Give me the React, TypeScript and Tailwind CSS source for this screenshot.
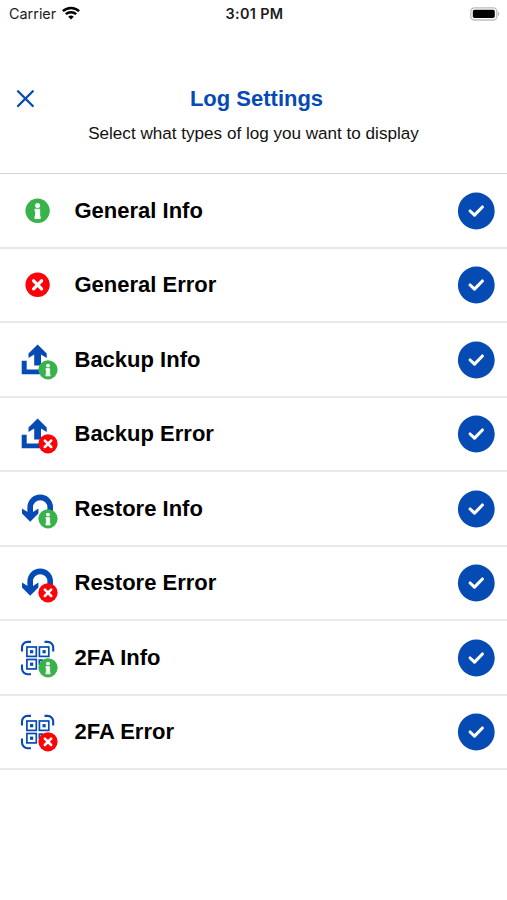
import { useState } from 'react';

type Glyph = 'general' | 'backup' | 'restore' | 'twofa';
type Level = 'info' | 'error';

const LOG_TYPES: { label: string; glyph: Glyph; level: Level }[] = [
  { label: 'General Info', glyph: 'general', level: 'info' },
  { label: 'General Error', glyph: 'general', level: 'error' },
  { label: 'Backup Info', glyph: 'backup', level: 'info' },
  { label: 'Backup Error', glyph: 'backup', level: 'error' },
  { label: 'Restore Info', glyph: 'restore', level: 'info' },
  { label: 'Restore Error', glyph: 'restore', level: 'error' },
  { label: '2FA Info', glyph: 'twofa', level: 'info' },
  { label: '2FA Error', glyph: 'twofa', level: 'error' },
];

const BLUE = '#064ab4';

// Drawn around 0,0 with a radius of 12
function Badge({ level }: { level: Level }) {
  if (level === 'error') {
    return (
      <>
        <circle r="12.2" fill="#fd0207" />
        <path d="M-4 -4L4 4M4 -4L-4 4" stroke="white" strokeWidth="3.3" strokeLinecap="round" />
      </>
    );
  }
  return (
    <>
      <circle r="12.2" fill="#37b34a" />
      <circle cy="-5.3" r="2.5" fill="white" />
      <path d="M-2.7 -1.6H2.1V5.8H2.7V7.8H-2.7V5.8H-2.1V0H-2.7Z" fill="white" stroke="white" strokeWidth="0.8" strokeLinejoin="round" />
    </>
  );
}

function QrCell({ x, y }: { x: number; y: number }) {
  return (
    <>
      <rect x={x} y={y} width="9.4" height="9.4" fill="none" stroke={BLUE} strokeWidth="1.7" />
      <rect x={x + 3.1} y={y + 3.1} width="3.2" height="3.2" fill={BLUE} />
    </>
  );
}

function LogIcon({ glyph, level }: { glyph: Glyph; level: Level }) {
  return (
    <svg width="40" height="40" viewBox="0 0 40 40" fill="none" aria-hidden="true">
      {glyph === 'backup' && (
        <path
          d="M19.6 4.5L28.7 13.6V18L23 14.4V25.6H16.2V14.4L10.5 18V13.6ZM3.7 20.7H8.7V29.6H30V34.3H3.7Z"
          fill={BLUE}
        />
      )}
      {glyph === 'restore' && (
        <>
          <path d="M12.2 27V18.4A10 10 0 0 1 32.2 18.4V26" stroke={BLUE} strokeWidth="5.6" />
          <path d="M4 19.4L9.6 23H15L20.4 19.4V24.4L12.2 32.8L4 24.4Z" fill={BLUE} />
        </>
      )}
      {glyph === 'twofa' && (
        <>
          <path
            d="M4 13.6V9.5A5.6 5.6 0 0 1 9.6 3.9H13M26.5 3.9H29.6A5.6 5.6 0 0 1 35.2 9.5V13.6M4 26.5V30.6A5.6 5.6 0 0 0 9.6 36.2H13"
            stroke={BLUE}
            strokeWidth="2.1"
          />
          <QrCell x={8.9} y={9} />
          <QrCell x={21.4} y={9} />
          <QrCell x={8.9} y={21.5} />
          <path d="M20.5 22.2H25M21.4 22V27" stroke={BLUE} strokeWidth="1.8" />
        </>
      )}
      <g transform={glyph === 'general' ? 'translate(19.6 19.8)' : 'translate(30 29.8) scale(.79)'}>
        <Badge level={level} />
      </g>
    </svg>
  );
}

function StatusBar() {
  return (
    <div className="grid h-7 grid-cols-3 items-center pr-[7px] pl-[9px] font-['Inter',sans-serif] text-[#1c1c1c]">
      <div className="flex items-center gap-[6px] text-[14.4px]">
        <span>Carrier</span>
        <svg className="-mt-px" width="18" height="14" viewBox="0 0 18 14" fill="none" stroke="black" strokeWidth="2.5" aria-hidden="true">
          <path d="M.9 5.1A11.8 11.8 0 0 1 17.1 5.1" />
          <path d="M3.8 8.2A7.6 7.6 0 0 1 14.2 8.2" />
          <path d="M6.2 10.8A4 4 0 0 1 11.8 10.8L9 13.6Z" fill="black" stroke="none" />
        </svg>
      </div>
      <div className="text-center text-[14.4px] font-semibold tracking-[0.35px]">3:01 PM</div>
      <svg className="-mt-px justify-self-end" width="30" height="14" viewBox="0 0 30 14" aria-hidden="true">
        <rect x=".8" y=".8" width="26" height="12.2" rx="3.6" fill="white" stroke="#bdbdbd" strokeWidth="1.3" />
        <rect x="2.8" y="2.7" width="22" height="8.4" rx="1.8" fill="black" />
        <path d="M28 4.6C29.8 5.4 29.8 8.4 28 9.2Z" fill="#bdbdbd" />
      </svg>
    </div>
  );
}

export default function App() {
  const [enabled, setEnabled] = useState<boolean[]>(LOG_TYPES.map(() => true));

  const toggle = (index: number) => {
    setEnabled(prev => prev.map((on, i) => (i === index ? !on : on)));
  };

  return (
    <div className="min-h-screen w-full bg-white font-['Liberation_Sans',Arial,sans-serif] text-black">
      <StatusBar />

      <header className="h-[145px] pt-[55px]">
        <div className="grid grid-cols-[60px_1fr_60px] items-center pl-[6px]">
          <button className="-mt-[2px] ml-[10px] flex h-8 w-[19px] items-center" aria-label="Close">
            <svg width="19" height="19" viewBox="0 0 19 19" fill="none" stroke={BLUE} strokeWidth="2.3" strokeLinecap="round" aria-hidden="true">
              <path d="M2 2.2L16.8 17M16.8 2.2L2 17" />
            </svg>
          </button>
          <h1 className="text-center text-[22px] leading-8 font-bold text-[#064ab4]">Log Settings</h1>
        </div>
        <p className="mt-[7px] text-center text-[17.1px] leading-6 text-[#111]">
          Select what types of log you want to display
        </p>
      </header>

      <ul className="border-t border-[#d4d4d4]">
        {LOG_TYPES.map((item, i) => (
          <li key={item.label} className="flex h-[74.5px] items-center border-b-2 border-[#e9e9e9] pt-px pr-3 pl-[18px]">
            <LogIcon glyph={item.glyph} level={item.level} />
            <span className="ml-[16.5px] flex-1 text-[22px] leading-7 font-bold">{item.label}</span>
            <button role="checkbox" aria-checked={enabled[i]} aria-label={item.label} onClick={() => toggle(i)}>
              <svg className="block" width="38" height="38" viewBox="0 0 38 38" fill="none">
                <circle cx="19.3" cy="19" r="18.4" fill={enabled[i] ? BLUE : '#d4d4d4'} />
                <path d="M13.1 19L17.5 23.2L25.4 15" stroke="white" strokeWidth="3.1" strokeLinecap="round" strokeLinejoin="round" />
              </svg>
            </button>
          </li>
        ))}
      </ul>
    </div>
  );
}
